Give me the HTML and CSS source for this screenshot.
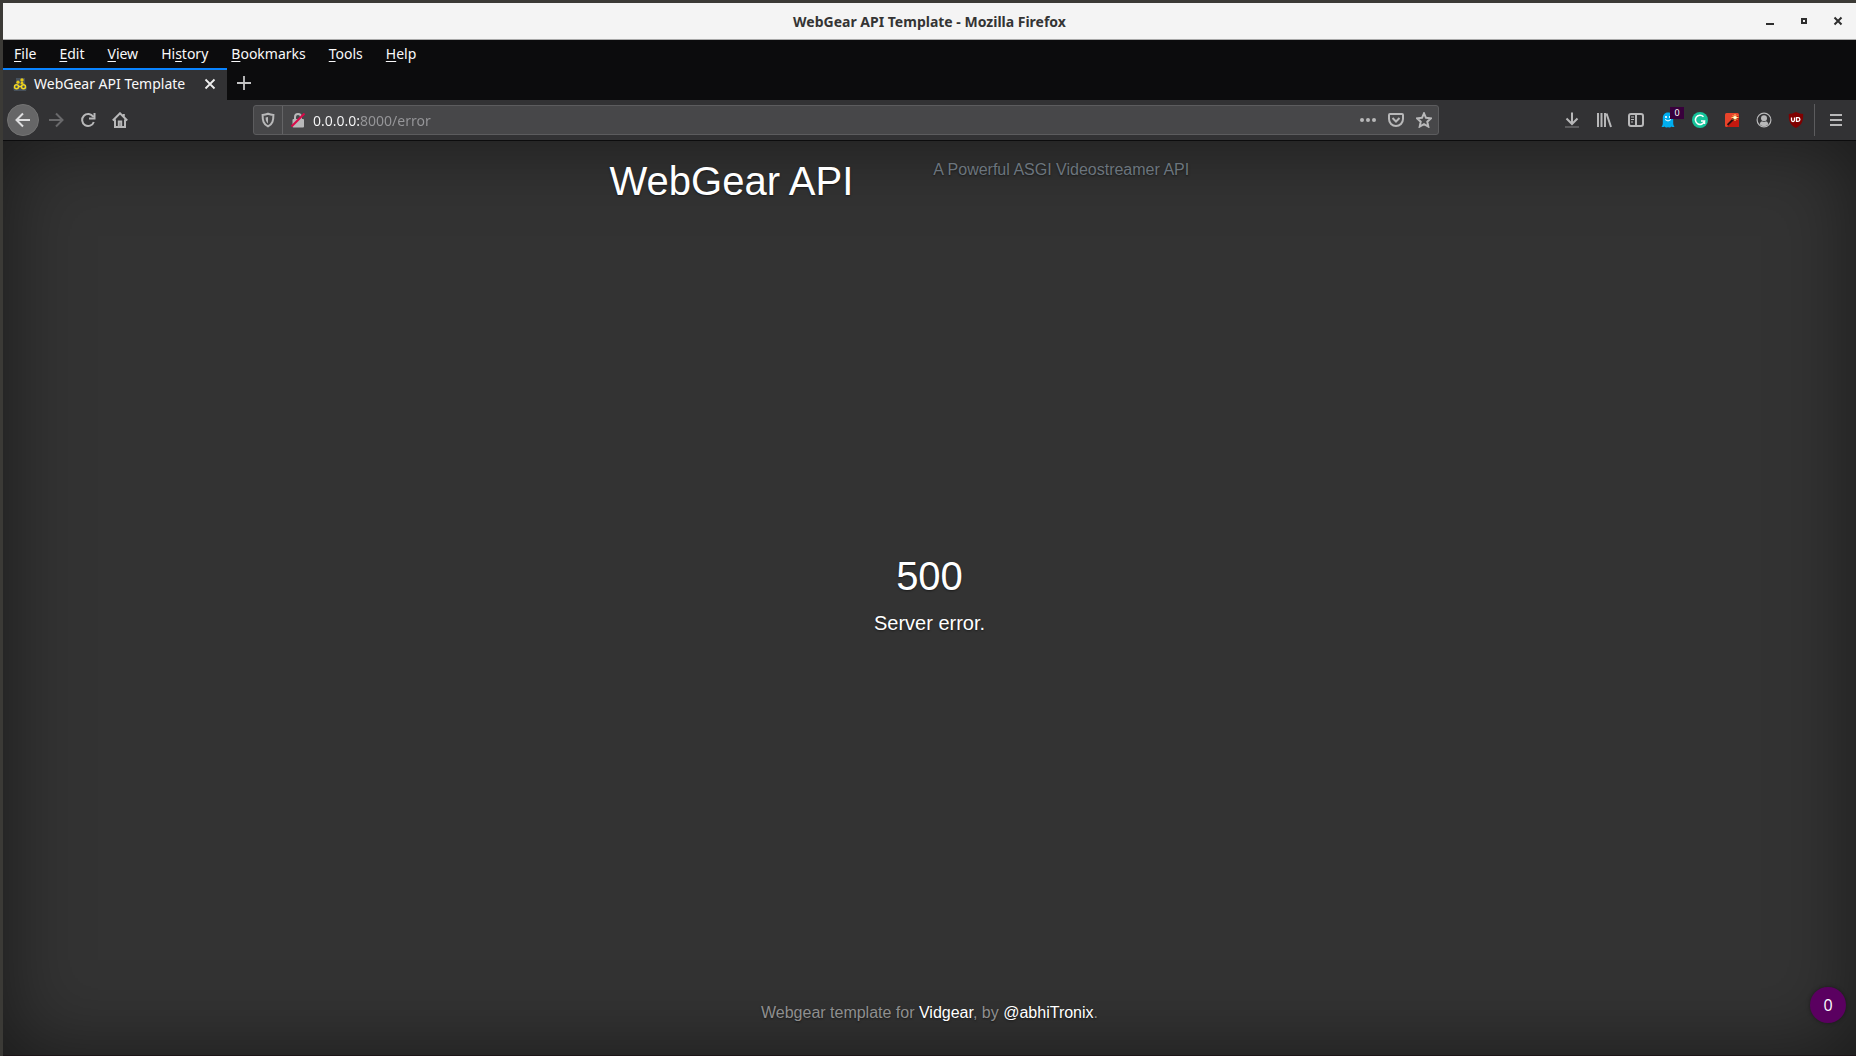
FILE: index.html
```html
<!DOCTYPE html>
<html lang="en">
<head>
<meta charset="utf-8">
<title>WebGear API Template</title>
<link rel="stylesheet" href="styles.css">
</head>
<body>
<div class="window">
  <header class="titlebar">
    <span class="window-title">WebGear API Template - Mozilla Firefox</span>
    <div class="window-controls">
      <button aria-label="Minimize"><svg width="10" height="10" viewBox="0 0 10 10"><path d="M1 8h8" stroke="#2e2e2e" stroke-width="2"/></svg></button>
      <button aria-label="Maximize"><svg width="10" height="10" viewBox="0 0 10 10"><path d="M3 3h4v4H3z" fill="none" stroke="#2e2e2e" stroke-width="2"/></svg></button>
      <button aria-label="Close window"><svg width="10" height="10" viewBox="0 0 10 10"><path d="M1.500 1.500l7 7M8.500 1.500l-7 7" stroke="#2e2e2e" stroke-width="2"/></svg></button>
    </div>
  </header>

  <nav class="menubar" aria-label="Application menu">
    <button><u>F</u>ile</button>
    <button><u>E</u>dit</button>
    <button><u>V</u>iew</button>
    <button>Hi<u>s</u>tory</button>
    <button><u>B</u>ookmarks</button>
    <button><u>T</u>ools</button>
    <button><u>H</u>elp</button>
  </nav>

  <div class="tabbar">
    <div class="tab">
      <svg width="14" height="14" viewBox="0 0 14 14"><path d="M3 1h9v6l2 4-1 3H1l-1-3 3-5z" fill="#46505c"/><g fill="none" stroke="#f4d820" stroke-width="1.500"><circle cx="3.500" cy="9.800" r="2"/><circle cx="10.500" cy="9.800" r="2"/><path d="M5 9.500h4"/></g><circle cx="5" cy="5.200" r="1.600" fill="#e8c915"/><circle cx="9" cy="3" r="1.700" fill="#e8c915"/><circle cx="9" cy="6.200" r="1.400" fill="#e8c915"/></svg>
      <span class="tab-label">WebGear API Template</span>
      <button class="tab-close" aria-label="Close tab"><svg width="12" height="12" viewBox="0 0 12 12"><path d="M1.500 1.500l9 9M10.500 1.500l-9 9" stroke="#eee" stroke-width="1.800"/></svg></button>
    </div>
    <button class="new-tab" aria-label="New tab"><svg width="16" height="16" viewBox="0 0 16 16"><path d="M8 1v14M1 8h14" stroke="#c4c4c5" stroke-width="1.800"/></svg></button>
  </div>

  <div class="toolbar">
    <button class="tool back" aria-label="Back"><svg class="icon" viewBox="0 0 16 16"><path d="M15 8H1.500M8 1.500L1.500 8 8 14.500"/></svg></button>
    <button class="tool forward" aria-label="Forward"><svg class="icon" viewBox="0 0 16 16"><path d="M1 8h13.500M8 1.500L14.500 8 8 14.500"/></svg></button>
    <button class="tool" aria-label="Reload"><svg class="icon" viewBox="0 0 16 16"><path d="M13.200 4.800A6 6 0 1 0 13.800 10M14.500 1v5.500H9"/></svg></button>
    <button class="tool" aria-label="Home"><svg class="icon" viewBox="0 0 16 16"><path d="M.8 8.500L8 1.300l7.200 7.200M3 7.500V15h10V7.500M11.800 4.500V2"/><path d="M6.800 14V9.500h2.400V14"/></svg></button>
    <div class="spacer"></div>
    <div class="urlbar">
      <button class="shield" aria-label="Tracking protection"><svg class="icon" viewBox="0 0 16 16"><path d="M8 1.700c2 .8 3.600 1.100 5.400 1.200 0 5.500-.7 9-5.400 11.500C3.300 11.900 2.600 8.400 2.600 2.900 4.400 2.800 6 2.500 8 1.700z"/><path d="M8 5v6.500C6.200 10 5.700 8.500 5.600 5.500z" fill="#b8b8b9" stroke="none"/></svg></button>
      <button class="lock" aria-label="Connection not secure"><svg class="icon" viewBox="0 0 16 16"><path d="M5 8V5a3 3 0 0 1 6 0v3"/><rect x="2.500" y="7" width="11.500" height="8.500" rx="1" fill="#b8b8b9" stroke="none"/><path d="M1.500 14.500l13-13" stroke="#d70a48" stroke-width="2.200"/></svg></button>
      <input class="address" type="text" aria-label="Address" value="0.0.0.0:8000/error">
      <button class="page-action" aria-label="Page actions"><svg class="icon" viewBox="0 0 16 16"><g fill="#b8b8b9" stroke="none"><circle cx="2" cy="8" r="2"/><circle cx="8" cy="8" r="2"/><circle cx="14" cy="8" r="2"/></g></svg></button>
      <button class="page-action" aria-label="Save to Pocket"><svg class="icon" viewBox="0 0 16 16"><path d="M2 2h12q1 0 1 1v4a7 7 0 0 1-14 0V3q0-1 1-1z"/><path d="M4.500 6L8 9.500 11.500 6"/></svg></button>
      <button class="page-action" aria-label="Bookmark this page"><svg class="icon" viewBox="0 0 16 16"><path d="M8 1.300l2 4.500 5 .5-3.700 3.400 1 4.900L8 12.200l-4.300 2.400 1-4.900L1 6.300l5-.5z"/></svg></button>
    </div>
    <div class="spacer"></div>
    <button class="tool" aria-label="Downloads"><svg class="icon" viewBox="0 0 16 16"><path d="M8 .5v11M2.500 6.500L8 12l5.500-5.500"/><path d="M1 15h14" stroke="#5a5a5c"/></svg></button>
    <button class="tool" aria-label="Library"><svg class="icon" viewBox="0 0 16 16"><path d="M2 1v14M5.500 1v14M9 1v14M10.500 1.500L15 15"/></svg></button>
    <button class="tool" aria-label="Sidebars"><svg class="icon" viewBox="0 0 16 16"><rect x="1" y="2" width="14" height="12" rx="2"/><path d="M8 2v12"/><path d="M3 5h3M3 7.500h3M3 10h2" stroke-width="1"/></svg></button>
    <button class="tool" aria-label="Ghostery"><svg class="icon" viewBox="0 0 16 16"><path d="M8 .5C4.500.5 2.800 3 2.800 6v5.500q0 2-1.300 3.300 1.800.7 3-.3 1.500 1.800 3.500.5 2 1.300 3.500-.5 1.200 1 3 .3-1.300-1.300-1.300-3.300V6c0-3-1.700-5.500-5.200-5.500z" fill="#00aef0" stroke="none"/><circle cx="6" cy="5" r="1.100" fill="#fff" stroke="none"/><circle cx="10" cy="5" r="1.100" fill="#fff" stroke="none"/><path d="M5 7.500q3 3 6 0" stroke="#fff" stroke-width="1"/></svg><span class="count">0</span></button>
    <button class="tool" aria-label="Grammarly"><svg class="icon" viewBox="0 0 16 16"><circle cx="8" cy="8" r="8" fill="#15c39a" stroke="none"/><path d="M11.500 4.800a4.600 4.600 0 1 0 1 4.200H9M12.500 9v3" stroke="#fff" stroke-width="1.500"/></svg></button>
    <button class="tool" aria-label="Magic wand"><svg class="icon" viewBox="0 0 16 16"><rect x="1" y="1" width="14" height="14" rx="1.500" fill="#e8432a" stroke="none"/><path d="M3 15L13 3l2 2v9q0 1-1 1z" fill="#c4180f" stroke="none"/><path d="M3.500 13L10 6.500" stroke="#281010" stroke-width="1.800"/><path d="M11 2v7M7.500 5.500h7M8.800 3.300l4.400 4.400M13.200 3.300L8.800 7.700" stroke="#ffd76a" stroke-width="1"/><circle cx="11" cy="5.500" r="1.600" fill="#fff8d8" stroke="none"/></svg></button>
    <button class="tool" aria-label="Account"><svg class="icon" viewBox="0 0 16 16"><circle cx="8" cy="8" r="6.900" stroke-width="1.200"/><circle cx="8" cy="6.200" r="3" fill="#b8b8b9" stroke="none"/><path d="M3.500 12.200Q4.500 9.500 6 9.300q2 1.200 4 0 1.500.2 2.500 2.900a6 6 0 0 1-9 0z" fill="#b8b8b9" stroke="none"/></svg></button>
    <button class="tool" aria-label="uBlock Origin"><svg class="icon" viewBox="0 0 16 16"><path d="M8 0q4 2 7.200 2c0 7-.7 10.500-7.200 14C1.500 12.500.8 9 .8 2Q4 2 8 0z" fill="#800000" stroke="none"/><path d="M3.500 5.500V8a1.500 1.500 0 0 0 3 0V5.500M8.500 5.700v3.600h1.600a1.800 1.800 0 0 0 0-3.600z" stroke="#fff" stroke-width="1.300"/></svg></button>
    <button class="tool app-menu" aria-label="Open menu"><svg class="icon" viewBox="0 0 16 16"><path d="M2 3h12M2 8h12M2 13h12"/></svg></button>
  </div>

  <div class="page">
    <header class="masthead">
      <h1>WebGear API</h1>
      <p class="tagline">A Powerful ASGI Videostreamer API</p>
    </header>
    <main class="error">
      <h1>500</h1>
      <p>Server error.</p>
    </main>
    <footer class="footer">Webgear template for <a href="#vidgear">Vidgear</a>, by <a href="#abhitronix">@abhiTronix</a>.</footer>
    <button class="tracker-count" aria-label="Trackers found">0</button>
  </div>
</div>
</body>
</html>
```

FILE: styles.css
```css
* {
  box-sizing: border-box;
}

body {
  margin: 0;
  background: #3b3a36;
  font-family: "Liberation Sans", Arial, sans-serif;
}

button {
  display: flex;
  align-items: center;
  justify-content: center;
  margin: 0;
  padding: 0;
  border: 0;
  background: none;
  color: inherit;
  font: inherit;
}

.window {
  display: flex;
  flex-direction: column;
  min-height: 100vh;
  padding: 3px 0 0 3px;
}

/* Title bar */

.titlebar,
.menubar,
.tabbar,
.toolbar {
  font-family: "Noto Sans", sans-serif;
  font-size: 14px;
  line-height: 20px;
}

.titlebar {
  display: grid;
  grid-template-columns: 1fr auto 1fr;
  align-items: center;
  height: 37px;
  border-bottom: 1px solid #a9a9a9;
  background: #f4f4f4;
}

.window-title {
  grid-column: 2;
  padding-top: 2px;
  color: #343434;
  font-weight: 700;
}

.window-controls {
  display: flex;
  justify-content: flex-end;
  gap: 24px;
  padding-right: 13px;
}

/* Menus and tabs */

.menubar {
  display: flex;
  gap: 23px;
  height: 28px;
  padding-left: 11px;
  background: #0c0c0d;
  color: #f9f9fa;
}

.menubar button {
  display: block;
}

.menubar u {
  text-underline-offset: 2px;
}

.tabbar {
  display: flex;
  height: 32px;
  background: #0c0c0d;
  color: #f9f9fa;
}

.tab {
  display: flex;
  align-items: center;
  width: 224px;
  padding: 0 11px 2px 10px;
  border-top: 2px solid #0a84ff;
  background: #323234;
}

.tab-label {
  flex: 1;
  padding-left: 7px;
  white-space: nowrap;
}

.new-tab {
  width: 34px;
  padding-bottom: 2px;
}

/* Navigation toolbar */

.toolbar {
  display: flex;
  align-items: center;
  height: 41px;
  padding-left: 4px;
  border-bottom: 1px solid #0c0c0d;
  background: #323234;
}

.icon {
  width: 16px;
  height: 16px;
  fill: none;
  stroke: #b8b8b9;
  stroke-width: 2;
}

.tool {
  position: relative;
  flex: none;
  width: 32px;
  height: 32px;
}

.back {
  margin-right: 1px;
  border: 1px solid #737373;
  border-radius: 50%;
  background: #666667;
}

.back .icon {
  stroke: #dededf;
}

.forward .icon {
  stroke: #69696b;
}

.spacer {
  flex: 0 0 117px;
}

.urlbar {
  display: flex;
  flex: 1;
  align-items: center;
  min-width: 0;
  height: 30px;
  border: 1px solid #5c5c5e;
  border-radius: 3px;
  background: #474749;
}

.shield {
  width: 29px;
  height: 28px;
  border-right: 1px solid #646466;
}

.lock {
  width: 30px;
}

.address {
  flex: 1;
  min-width: 0;
  padding: 2px 0 0;
  border: 0;
  outline: 0;
  background: linear-gradient(to right, #f9f9fa 46px, #97979a 46px);
  background-clip: text;
  -webkit-background-clip: text;
  color: transparent;
  font: inherit;
}

.page-action {
  width: 28px;
  height: 28px;
}

.count {
  position: absolute;
  top: 3px;
  right: 0;
  width: 14px;
  background: #38003c;
  color: #fff;
  font-size: 9px;
  line-height: 12px;
}

.app-menu {
  width: 42px;
  margin-left: 2px;
  border-left: 1px solid #5c5c5e;
}

/* Web page */

.page {
  position: relative;
  display: flex;
  flex: 1;
  flex-direction: column;
  align-items: center;
  justify-content: space-between;
  padding: 16px;
  border-bottom: 1px solid #1d1518;
  background: #333;
  box-shadow: inset 0 0 80px rgba(0, 0, 0, 0.5);
  color: #fff;
  text-shadow: 0 1px 2px rgba(0, 0, 0, 0.5);
}

.page h1,
.page p {
  margin: 0;
  font-weight: 400;
}

.page h1 {
  font-size: 40px;
  line-height: 48px;
}

.masthead {
  display: flex;
  justify-content: flex-start;
  gap: 80px;
  width: 100%;
  max-width: 640px;
}

.masthead .tagline {
  color: #6c757d;
  font-size: 16px;
  line-height: 26px;
}

.error {
  padding-bottom: 16px;
  text-align: center;
}

.error h1 {
  margin-bottom: 8px;
}

.error p {
  font-size: 20px;
  line-height: 30px;
}

.footer {
  padding-bottom: 14px;
  color: #8f8f8f;
  font-size: 16px;
  line-height: 24px;
}

.footer a {
  color: #fff;
  text-decoration: none;
}

.tracker-count {
  position: absolute;
  right: 10px;
  bottom: 32px;
  width: 36px;
  height: 36px;
  border-radius: 50%;
  background: #5a0060;
  box-shadow: 0 0 4px rgba(0, 0, 0, 0.4);
  font-family: "Open Sans", sans-serif;
  font-size: 16px;
  text-shadow: none;
}
```
